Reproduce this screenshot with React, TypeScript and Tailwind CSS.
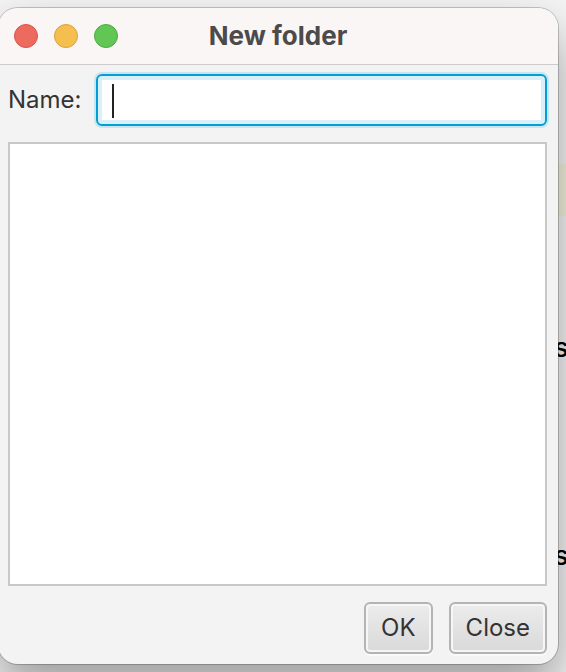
import { useState } from "react";
import type { ButtonHTMLAttributes } from "react";

const LIGHTS = [
  { label: "Close window", color: "border-[#d9544b] bg-[#ed6a5f]" },
  { label: "Minimize window", color: "border-[#dba23a] bg-[#f5bf4f]" },
  { label: "Zoom window", color: "border-[#4fab40] bg-[#61c654]" },
];

export default function App() {
  return (
    <div className="relative flex min-h-screen flex-col overflow-hidden bg-[#f4f4f4] py-2 pr-2 font-['Inter',sans-serif]">
      <Backdrop />
      <NewFolderDialog />
    </div>
  );
}

// slice of the page that shows past the right edge of the dialog
function Backdrop() {
  return (
    <div className="absolute inset-y-0 right-0 w-3 overflow-hidden text-[27px] leading-8 font-medium text-black">
      <div className="absolute inset-x-0 top-41 h-13 bg-[#f3f1dc]" />
      <span className="absolute top-[332px] left-0">s</span>
      <span className="absolute top-[540px] left-0">s</span>
    </div>
  );
}

function NewFolderDialog() {
  const [name, setName] = useState("");

  return (
    <form
      onSubmit={(e) => e.preventDefault()}
      className="relative -ml-0.5 flex flex-1 flex-col overflow-hidden rounded-[20px] bg-[#f3f3f3] shadow-[0_0_0_1px_rgba(0,0,0,0.2),0_24px_48px_rgba(0,0,0,0.36)]"
    >
      <TitleBar title="New folder" />
      <div className="flex flex-1 flex-col gap-4 pt-[9px] pr-[11px] pb-2.5 pl-2.5">
        <div className="flex items-center gap-3.5">
          <label htmlFor="folder-name" className="text-[24px] leading-8 text-[#333333]">
            Name:
          </label>
          <div className="relative min-w-0 flex-1">
            <input
              id="folder-name"
              type="text"
              value={name}
              onChange={(e) => setName(e.target.value)}
              className="block h-13 w-full rounded-md border-2 border-[#039ed3] bg-white px-4 text-[24px] text-[#333333] caret-transparent shadow-[0_0_0_2px_#c8e6f0,inset_0_0_0_4px_#d9f0f8] outline-none"
            />
            {name === "" && <div className="absolute top-2.5 left-4 h-8.5 w-0.5 bg-[#222222]" />}
          </div>
        </div>
        <div className="flex-1 border-2 border-[#c8c8c8] bg-white" />
        <div className="flex justify-end gap-4">
          <DialogButton type="submit">OK</DialogButton>
          <DialogButton type="button">Close</DialogButton>
        </div>
      </div>
    </form>
  );
}

function TitleBar({ title }: { title: string }) {
  return (
    <div className="relative flex h-[57px] items-center border-b border-[#cdcbcb] bg-[#faf6f5] pl-4">
      <div className="flex gap-4">
        {LIGHTS.map((light) => (
          <button
            key={light.label}
            type="button"
            aria-label={light.label}
            className={`size-6 rounded-full border ${light.color}`}
          />
        ))}
      </div>
      <h1 className="pointer-events-none absolute inset-x-0 text-center text-[26px] leading-8 font-bold text-[#4c4a4a]">
        {title}
      </h1>
    </div>
  );
}

function DialogButton(props: ButtonHTMLAttributes<HTMLButtonElement>) {
  return (
    <button
      {...props}
      className="h-13 rounded-md border-2 border-[#b4b4b4] bg-linear-to-b from-[#ececec] to-[#d9d9d9] px-[15px] text-[24px] leading-8 text-[#333333] shadow-[0_2px_0_#fafafa,inset_0_0_0_2px_#f6f6f6]"
    />
  );
}
